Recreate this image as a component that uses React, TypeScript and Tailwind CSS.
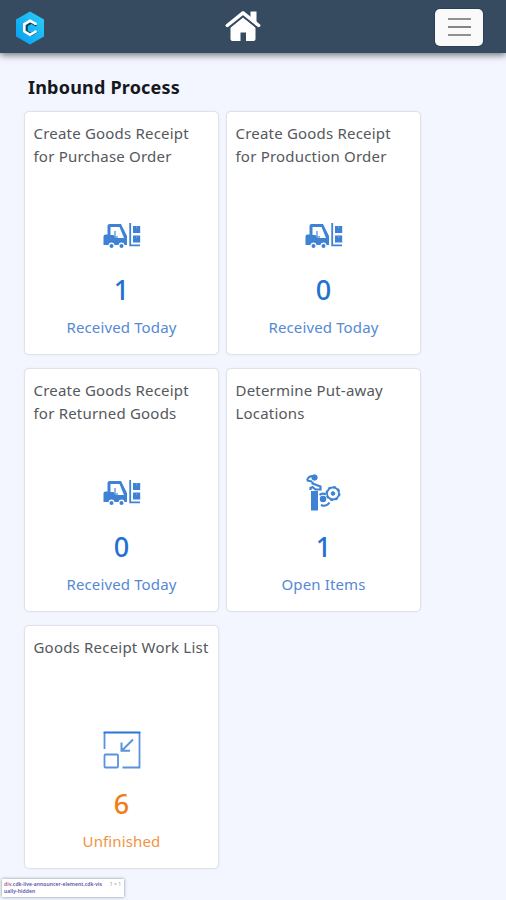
import React from "react";

function Forklift() {
  return (
    <svg width="38" height="28" viewBox="0 0 38 28" fill="none">
      <path
        fillRule="evenodd"
        fill="#3f82d3"
        d="M6.500 2h11.500l6 12v9h-2.400a3.200 3.200 0 0 0-6.200 0h-3.800a3.200 3.200 0 0 0-6.200 0H.5V14.500q0-2 2-2h2V4q0-2 2-2zM7.500 5v8h3l2.500 3h8L16.500 5z"
      />
      <path d="M12 9v6M12 15h3" stroke="#6d9fdd" strokeWidth="1.500" />
      <circle cx="8.500" cy="24" r="2" fill="#3f82d3" />
      <circle cx="18.500" cy="24" r="2" fill="#3f82d3" />
      <path d="M27.200 1v22.300H37" stroke="#3f82d3" strokeWidth="1.800" />
      <path d="M30 4h7.200v7H30zM30 13.500h7.200v7H30z" fill="#3f82d3" />
      <path d="M33.600 4v2.500M33.600 13.500v2.500" stroke="#6c9fdf" strokeWidth="1" />
    </svg>
  );
}

function RobotArm() {
  return (
    <svg width="38" height="40" viewBox="0 0 38 40" fill="none" stroke="#3f82d3">
      <path d="M6 18h7v19.500H6z" fill="#3f82d3" stroke="none" />
      <path d="M2 7.500q1-4 5-4.500h2M2 7.500l5 1" strokeWidth="2" />
      <circle cx="9.500" cy="4.500" r="2.700" fill="#3f82d3" strokeWidth="1" />
      <path d="M7.500 8.500v2l8 3v3h-5l-3-2.500-2 1v2" strokeWidth="2.200" />
      <circle cx="28" cy="20.500" r="6" strokeWidth="1.800" />
      <circle cx="28" cy="20.500" r="6.900" strokeWidth="1.300" strokeDasharray="2.710 2.710" />
      <circle cx="28" cy="20.500" r="1.800" fill="#3f82d3" strokeWidth="1" />
      <circle cx="18" cy="26" r="2.500" fill="#3f82d3" strokeWidth="1.500" />
      <path d="M14.500 22q3-2.500 6.500-.5M16 32q5 2.500 8.500-2.500" strokeWidth="2" />
    </svg>
  );
}

function WorkList() {
  return (
    <svg width="38" height="38" viewBox="0 0 38 38" fill="none" stroke="#5b92dc" strokeWidth="1.800">
      <path d="M1.500 18V1.500M36.500 1.500v35H19.500" />
      <path d="M.6 1.500h36.800" stroke="#2478d8" strokeWidth="2" />
      <rect x="1.500" y="23.500" width="13.500" height="13" rx="1" />
      <path d="M30 8.500L19 19.500M18.500 11.500v8.300H27" strokeWidth="2" />
    </svg>
  );
}

type CardProps = {
  lines: string[];
  icon: React.ReactNode;
  value: number;
  label: string;
  orange?: boolean;
};

function Card({ lines, icon, value, label, orange }: CardProps) {
  return (
    <div className="flex h-[244px] w-[195px] flex-col rounded-[5px] border border-[#dfe2e9] bg-white pt-[10px] shadow-[0_0_2px_#e4e8f2]">
      <div className="h-[94px] pl-[8.5px] text-[15px] leading-[23px] tracking-[0.2px] text-[#55585c]">
        {lines.map((l) => (
          <div key={l} className="whitespace-nowrap">{l}</div>
        ))}
      </div>
      <div className="flex flex-col items-center">
        <div className="flex h-[40px] items-center">{icon}</div>
        <div className={`mt-[16px] h-[36px] text-[27px] leading-[36px] font-medium ${orange ? "text-[#ef7d1a]" : "text-[#2271d2]"}`}>{value}</div>
        <div className={`mt-[8px] text-[15px] leading-[23px] tracking-[0.13px] ${orange ? "text-[#f29342]" : "text-[#5589d5]"}`}>{label}</div>
      </div>
    </div>
  );
}

export default function App() {
  return (
    <div className="relative h-[900px] w-[506px] overflow-hidden bg-[#f3f6ff] font-['Noto_Sans','Open_Sans',sans-serif]">
      <header className="flex h-[53px] items-center justify-between bg-[#364a60] pr-[23px] pl-[15px] shadow-[0_2px_7px_rgba(0,0,0,0.55)]">
        <svg className="mt-[2px]" width="30" height="34" viewBox="0 0 30 34">
          <defs>
            <linearGradient id="hex" x1="0" y1="1" x2="1" y2="0">
              <stop offset="0" stopColor="#079bf0" />
              <stop offset="1" stopColor="#2bd0f8" />
            </linearGradient>
          </defs>
          <path d="M15 .5l14 8v17l-14 8-14-8v-17z" fill="url(#hex)" />
          <path d="M21.500 14.500l-5-3-5 3v6l5 3 5.500-3" fill="none" stroke="#123e60" strokeWidth="2.500" />
          <path d="M20.500 14v-1.300L15 9.800l-5.700 3.500v7l5.700 3.500 5.500-3v-1.300" fill="none" stroke="#fff" strokeWidth="2.600" />
        </svg>
        <svg className="-mt-[2px] ml-[5px]" width="36" height="32" viewBox="0 0 36 32">
          <path d="M5.500 17.500L18 7.500l12.500 10V29q0 2-2 2h-7.500v-8.500h-5.500V31H7.500q-2 0-2-2z" fill="#fff" />
          <path d="M2.500 18L18 5 33.500 18" fill="none" stroke="#364a60" strokeWidth="3" />
          <path d="M25.500 1.500h6v12.500l-6-5z" fill="#fff" />
          <path d="M2.300 15.500L18 2.800l15.700 12.700" fill="none" stroke="#fff" strokeWidth="3.500" strokeLinecap="round" strokeLinejoin="round" />
        </svg>
        <div className="mt-[1px] flex h-[37px] w-[48px] flex-col items-center justify-center gap-[6px] rounded-[5px] bg-[#fafafa] shadow-[0_0_0_1px_#294057]">
          <i className="h-[2px] w-[23px] bg-[#919191]" />
          <i className="h-[2px] w-[23px] bg-[#858585]" />
          <i className="h-[2px] w-[23px] bg-[#919191]" />
        </div>
      </header>
      <main className="pt-[22px] pl-[24px]">
        <h1 className="ml-[4px] h-[36px] text-[18px] leading-[24px] font-bold tracking-[0.2px] text-[#15181c]">Inbound Process</h1>
        <div className="grid w-[397px] grid-cols-2 gap-x-[7px] gap-y-[13px]">
          <Card lines={["Create Goods Receipt", "for Purchase Order"]} icon={<Forklift />} value={1} label="Received Today" />
          <Card lines={["Create Goods Receipt", "for Production Order"]} icon={<Forklift />} value={0} label="Received Today" />
          <Card lines={["Create Goods Receipt", "for Returned Goods"]} icon={<Forklift />} value={0} label="Received Today" />
          <Card lines={["Determine Put-away", "Locations"]} icon={<RobotArm />} value={1} label="Open Items" />
          <Card lines={["Goods Receipt Work List"]} icon={<WorkList />} value={6} label="Unfinished" orange />
        </div>
      </main>
      <div className="absolute top-[879px] left-[2px] flex h-[18px] w-[122px] justify-between bg-white px-[2px] pt-[2px] text-[5px] leading-[7px] font-semibold text-[#5550a8] shadow-[0_0_3px_rgba(60,70,90,0.6)]">
        <div className="whitespace-nowrap tracking-[0.08px]">
          <span className="text-[#b0538c]">div</span>.cdk-live-announcer-element.cdk-vis
          <br />
          ually-hidden
        </div>
        <span className="pr-[1px] font-normal text-[#9599a3]">1 × 1</span>
      </div>
    </div>
  );
}
